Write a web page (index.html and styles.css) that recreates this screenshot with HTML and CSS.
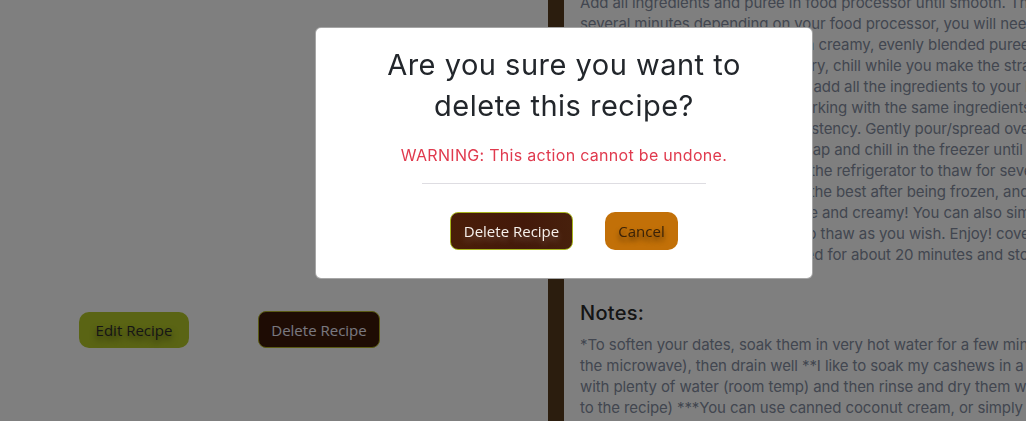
FILE: index.html
```html
<!DOCTYPE html>
<html lang="en">
<head>
<meta charset="utf-8">
<title>Delete recipe</title>
<link rel="stylesheet" href="styles.css">
</head>
<body>
<div class="page">
  <section class="left">
    <div class="actions">
      <button class="btn btn-edit">Edit Recipe</button>
      <button class="btn btn-delete-bg">Delete Recipe</button>
    </div>
  </section>
  <section class="right">
    <div class="instructions">
      <p class="line">Add all ingredients and puree in food processor until smooth. This may take</p>
      <p class="line">several minutes depending on your food processor, you will need to scrape</p>
      <p class="line">down the sides often to achieve a creamy, evenly blended puree. Cover</p>
      <p class="line">So cover and set aside. Strawberry, chill while you make the strawberry layer.</p>
      <p class="line">Now for the strawberry layer just add all the ingredients to your blender and</p>
      <p class="line">blend on high, until smooth. If working with the same ingredients, check</p>
      <p class="line">for a nice thick, spreadable consistency. Gently pour/spread over the</p>
      <p class="line">the first layer, then, cover with wrap and chill in the freezer until set.</p>
      <p class="line">When ready to serve, transfer to the refrigerator to thaw for several hours.</p>
      <p class="line">In my opinion this dessert tastes the best after being frozen, and then thawed</p>
      <p class="line">so it is soft, cold, smooth and nice and creamy! You can also simply slice</p>
      <p class="line">and take out individual portions to thaw as you wish. Enjoy! covered tightly in the freezer.</p>
      <p class="line">Let it sit out at room temp, covered for about 20 minutes and store</p>
    </div>
    <h2 class="notes-title">Notes:</h2>
    <div class="notes">
      <p class="line">*To soften your dates, soak them in very hot water for a few minutes (or heat in</p>
      <p class="line">the microwave), then drain well **I like to soak my cashews in a bowl overnight</p>
      <p class="line">with plenty of water (room temp) and then rinse and dry them well before adding</p>
      <p class="line">to the recipe) ***You can use canned coconut cream, or simply refrigerate a can</p>
    </div>
  </section>
</div>

<div class="overlay">
  <div class="modal">
    <h1 class="modal-title">Are you sure you want to<br>delete this recipe?</h1>
    <p class="warning">WARNING: This action cannot be undone.</p>
    <hr class="divider">
    <div class="modal-actions">
      <button class="btn btn-delete">Delete Recipe</button>
      <button class="btn btn-cancel">Cancel</button>
    </div>
  </div>
</div>
</body>
</html>
```

FILE: styles.css
```css
html, body {
  margin: 0;
  padding: 0;
  background: #ffffff;
  overflow: hidden;
  height: 421px;
}

body {
  font-family: Inter, "Noto Sans", sans-serif;
}

.page {
  display: grid;
  grid-template-columns: 548px 1fr;
  height: 421px;
}

.left {
  padding-top: 311px;
}

.actions {
  display: flex;
  align-items: center;
  gap: 69px;
  padding-left: 79px;
}

.btn {
  font-family: "Open Sans", "Noto Sans", sans-serif;
  font-size: 15px;
  line-height: 20px;
  cursor: pointer;
  border: 1px solid transparent;
  border-radius: 10px;
}

.btn-edit {
  width: 110px;
  height: 36px;
  background: #b4c828;
  color: #2c2c2c;
  text-shadow: 0 4px 6px rgba(0, 0, 0, 0.55);
}

.btn-delete-bg {
  width: 122px;
  height: 37px;
  background: #3c1808;
  border-color: #b4b428;
  color: #f2f0ff;
  border-radius: 8px;
}

.right {
  border-left: 16px solid #563a1c;
  padding-left: 16px;
  color: #848da0;
  font-size: 15px;
  letter-spacing: -0.1px;
  overflow: hidden;
}

.line {
  margin: 0;
  white-space: nowrap;
  line-height: 21px;
}

.instructions {
  margin-top: -8px;
}

.notes-title {
  margin: 33px 0 6px;
  font-size: 20px;
  font-weight: 500;
  line-height: 30px;
  letter-spacing: 0.3px;
  color: #2a2a2a;
}

.overlay {
  position: fixed;
  inset: 0;
  background: rgba(0, 0, 0, 0.5);
  padding: 27px 0 0 315px;
}

.modal {
  box-sizing: border-box;
  width: 498px;
  height: 252px;
  background: #ffffff;
  border: 1px solid rgba(0, 0, 0, 0.35);
  border-radius: 6px;
  padding-top: 16px;
  display: flex;
  flex-direction: column;
  align-items: center;
}

.modal-title {
  margin: 0;
  font-size: 29px;
  font-weight: 400;
  line-height: 41px;
  letter-spacing: 0.5px;
  color: #22262b;
  text-align: center;
}

.warning {
  margin: 18px 0 0;
  font-size: 16px;
  line-height: 22px;
  letter-spacing: 0.3px;
  color: #e03a4e;
}

.divider {
  width: 284px;
  margin: 17px 0 0;
  border: 0;
  border-top: 1px solid #dedde2;
}

.modal-actions {
  display: flex;
  gap: 32px;
  margin-top: 28px;
}

.btn-delete {
  width: 123px;
  height: 38px;
  background: linear-gradient(90deg, #4a1e08, #43190a 60%, #47200c);
  border-color: #a8b51e;
  color: #f6f1ec;
  border-radius: 8px;
  text-shadow: 0 4px 6px rgba(255, 255, 255, 0.25);
}

.btn-cancel {
  width: 73px;
  height: 38px;
  background: #c27008;
  color: #3a2208;
  text-shadow: 0 4px 5px rgba(0, 0, 0, 0.55);
}
```
